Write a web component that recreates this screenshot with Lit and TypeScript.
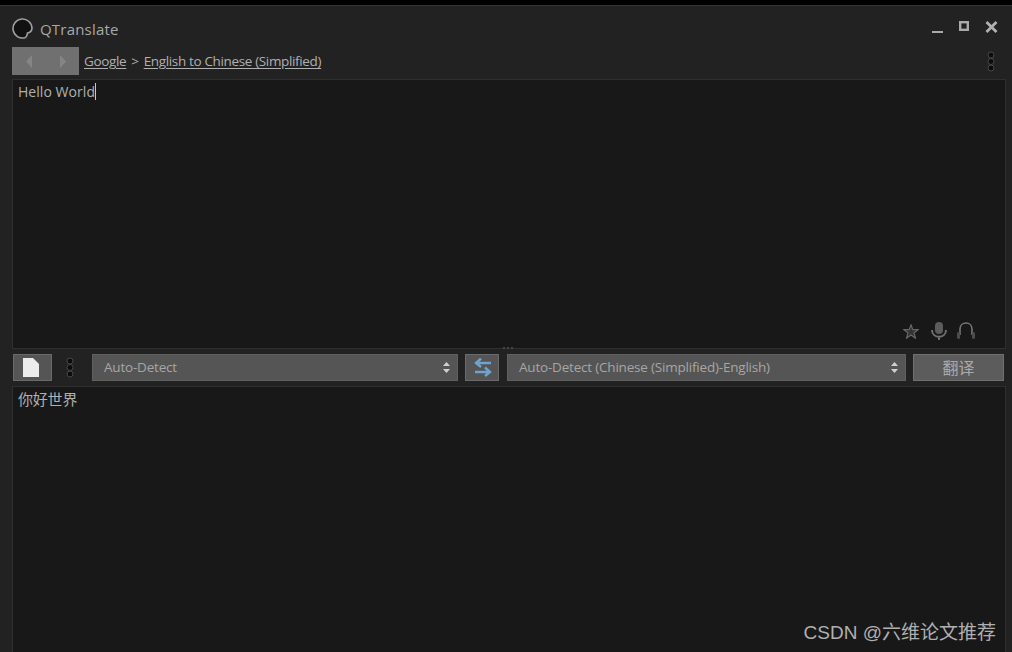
import { LitElement, html, css, svg } from "lit";
import { customElement } from "lit/decorators.js";

const arrows = svg`<path d="M18 5 L3 5 L3 5 M8 0.500 L3 5 L8 9" fill="none" stroke="#6fa3cf" stroke-width="2.400"/><path d="M2 14 L17 14 M12 9.500 L17 14 L12 18" fill="none" stroke="#6fa3cf" stroke-width="2.400"/>`;

@customElement("app-root")
export class AppRoot extends LitElement {
  static styles = css`
    :host {
      display: block;
      width: 1012px;
      height: 652px;
      overflow: hidden;
      position: relative;
      background: #000;
      font-family: "Liberation Sans", "Noto Sans CJK SC", sans-serif;
      color: #b4b4b4;
    }
    .window {
      margin-top: 5px;
      height: 647px;
      background: #222222;
      border-top: 1px solid #333;
      box-sizing: border-box;
      padding: 0 6px 0 12px;
      display: flex;
      flex-direction: column;
    }
    .title {
      height: 41px;
      box-sizing: border-box;
      padding-top: 4px;
      flex: none;
      display: flex;
      align-items: center;
      gap: 7px;
      font-family: "Open Sans", sans-serif;
      font-size: 15px;
      letter-spacing: 0.2px;
      color: #a8a8a8;
    }
    .title span { flex: 1; }
    .wincontrols { display: flex; gap: 15px; padding-right: 8px; margin-top: -3px; }
    .nav {
      height: 28px;
      flex: none;
      display: flex;
      align-items: center;
      gap: 5px;
      font-family: "Open Sans", sans-serif;
      font-size: 13.5px;
      letter-spacing: -0.35px;
      color: #b0b0b0;
    }
    .nav u { text-underline-offset: 2px; }
    .nav .crumbs { flex: 1; display: flex; gap: 5px; }
    .back {
      width: 67px;
      height: 28px;
      background: #707070;
      display: flex;
      align-items: center;
      justify-content: center;
      gap: 26px;
      box-sizing: border-box;
    }
    .grip { display: block; }
    .nav .grip { margin-right: 9px; }
    .pane {
      background: #181818;
      border: 1px solid #2f2f2f;
      box-sizing: border-box;
      padding: 2px 5px;
      font-family: "Open Sans", "Noto Sans CJK SC", sans-serif;
      font-size: 14px;
      letter-spacing: 0.05px;
      color: #b0b0b0;
      position: relative;
    }
    .source { height: 270px; margin-top: 4px; flex: none; }
    .result {
      flex: 1;
      margin-top: 4px;
      border-bottom: none;
      padding-top: 1px;
      font-size: 15px;
      letter-spacing: -0.2px;
    }
    .caret {
      display: inline-block;
      width: 1px;
      height: 17px;
      background: #c8c8c8;
      vertical-align: -3px;
    }
    .tools {
      position: absolute;
      right: 29px;
      bottom: 7px;
      display: flex;
      gap: 8px;
      align-items: center;
    }
    .star { margin-right: 3px; }
    .toolbar {
      height: 28px;
      margin-top: 5px;
      margin-left: 1px;
      flex: none;
      display: flex;
      align-items: center;
      position: relative;
      top: -1px;
    }
    .box {
      box-sizing: border-box;
      height: 27px;
      background: #555;
      border: 1px solid #6a6a6a;
      display: flex;
      align-items: center;
      justify-content: center;
    }
    .doc { width: 39px; padding-right: 3px; }
    .tb-grip { width: 36px; margin-right: 4px; display: flex; justify-content: center; }
    .select {
      box-sizing: border-box;
      height: 27px;
      background: #555;
      border: 1px solid #606060;
      display: flex;
      align-items: center;
      padding: 0 6px 0 11px;
      font-family: "Open Sans", sans-serif;
      font-size: 13.5px;
      letter-spacing: -0.2px;
      color: #a6a6a6;
    }
    .select span { flex: 1; }
    .from { width: 366px; }
    .swap { width: 34px; margin: 0 8px 0 7px; }
    .to { width: 399px; }
    .go {
      width: 91px;
      margin-left: 7px;
      font-size: 16px;
      color: #aaa;
      font-family: "Noto Sans CJK SC", sans-serif;
      background: #5c5c5c;
      border-color: #707070;
    }
    .dots {
      position: absolute;
      top: -6px;
      left: 489px;
      width: 12px;
      height: 2px;
      background: radial-gradient(circle, #444 1px, transparent 1px) 0 0 / 4px 2px;
    }
    .mark {
      position: absolute;
      right: 16px;
      bottom: 8px;
      font-size: 19px;
      color: #b0b0b0;
      font-family: "Liberation Sans", "Noto Sans CJK SC", sans-serif;
    }
  `;

  grip() {
    return html`<svg class="grip" width="12" height="21" viewBox="0 0 12 21">
      <circle cx="6" cy="4" r="3" fill="#0c0c0c" stroke="#484848" stroke-width="1"/>
      <circle cx="6" cy="10.500" r="3" fill="#0c0c0c" stroke="#484848" stroke-width="1"/>
      <circle cx="6" cy="17" r="3" fill="#0c0c0c" stroke="#484848" stroke-width="1"/>
    </svg>`;
  }

  updown() {
    return html`<svg width="9" height="13" viewBox="0 0 9 13">
      <path d="M4.500 1 L8 5 L1 5 Z M4.500 12 L8 8 L1 8 Z" fill="#d0d0d0"/>
    </svg>`;
  }

  render() {
    return html`
      <div class="window">
        <div class="title">
          <svg width="21" height="21" viewBox="0 0 21 21">
            <path d="M13 19.700 A9.500 9.500 0 1 1 20 10.500 C19.500 13.500 17 14.800 15.500 15 C15.200 17 14.500 19 13 19.700 Z" fill="#111" stroke="#a0a0a0" stroke-width="1.600"/>
          </svg>
          <span>QTranslate</span>
          <div class="wincontrols">
            <svg width="13" height="13" viewBox="0 0 13 13"><rect x="1" y="10" width="11" height="2" fill="#aaa"/></svg>
            <svg width="11" height="13" viewBox="0 0 11 13"><rect x="1.200" y="1.200" width="7.600" height="7.600" fill="none" stroke="#aaa" stroke-width="2.400"/></svg>
            <svg width="13" height="13" viewBox="0 0 13 13"><path d="M1.500 1 L11.500 11 M11.500 1 L1.500 11" stroke="#b0b0b0" stroke-width="2.800"/></svg>
          </div>
        </div>
        <div class="nav">
          <div class="back">
            <svg width="8" height="15" viewBox="0 0 8 15"><path d="M7 1 L1 7.500 L7 14 Z" fill="#858585"/></svg>
            <svg width="8" height="15" viewBox="0 0 8 15"><path d="M1 1 L7 7.500 L1 14 Z" fill="#858585"/></svg>
          </div>
          <div class="crumbs"><u>Google</u> &gt; <u>English to Chinese (Simplified)</u></div>
          ${this.grip()}
        </div>
        <div class="pane source">
          Hello World<span class="caret"></span>
          <div class="tools">
            <svg class="star" width="16" height="15" viewBox="0 0 18 17"><path d="M9 1 L11 6.500 L17 6.500 L12.500 10 L14 16 L9 12.500 L4 16 L5.500 10 L1 6.500 L7 6.500 Z" fill="#333" stroke="#666" stroke-width="1.400"/></svg>
            <svg width="18" height="20" viewBox="0 0 18 20"><rect x="5" y="1" width="8" height="12" rx="4" fill="#5c5c5c"/><path d="M2 9 C2 18 16 18 16 9 M9 15 L9 19" fill="none" stroke="#707070" stroke-width="2"/></svg>
            <svg width="20" height="18" viewBox="0 0 20 18"><path d="M4 13 L4 7 C4 -1 16 -1 16 7 L16 13" fill="none" stroke="#777" stroke-width="1.600"/><rect x="1" y="10" width="3" height="7" rx="1.500" fill="#4c4c4c"/><rect x="16" y="10" width="3" height="7" rx="1.500" fill="#4c4c4c"/></svg>
          </div>
        </div>
        <div class="toolbar">
          <div class="dots"></div>
          <div class="box doc">
            <svg width="16" height="19" viewBox="0 0 16 19"><path d="M0 0 L10 0 L16 6 L16 19 L0 19 Z" fill="#ececec"/></svg>
          </div>
          <div class="tb-grip">${this.grip()}</div>
          <div class="select from"><span>Auto-Detect</span>${this.updown()}</div>
          <div class="box swap"><svg width="19" height="19" viewBox="0 0 19 19">${arrows}</svg></div>
          <div class="select to"><span>Auto-Detect (Chinese (Simplified)-English)</span>${this.updown()}</div>
          <div class="box go">翻译</div>
        </div>
        <div class="pane result">你好世界</div>
      </div>
      <div class="mark">CSDN @六维论文推荐</div>
    `;
  }
}
